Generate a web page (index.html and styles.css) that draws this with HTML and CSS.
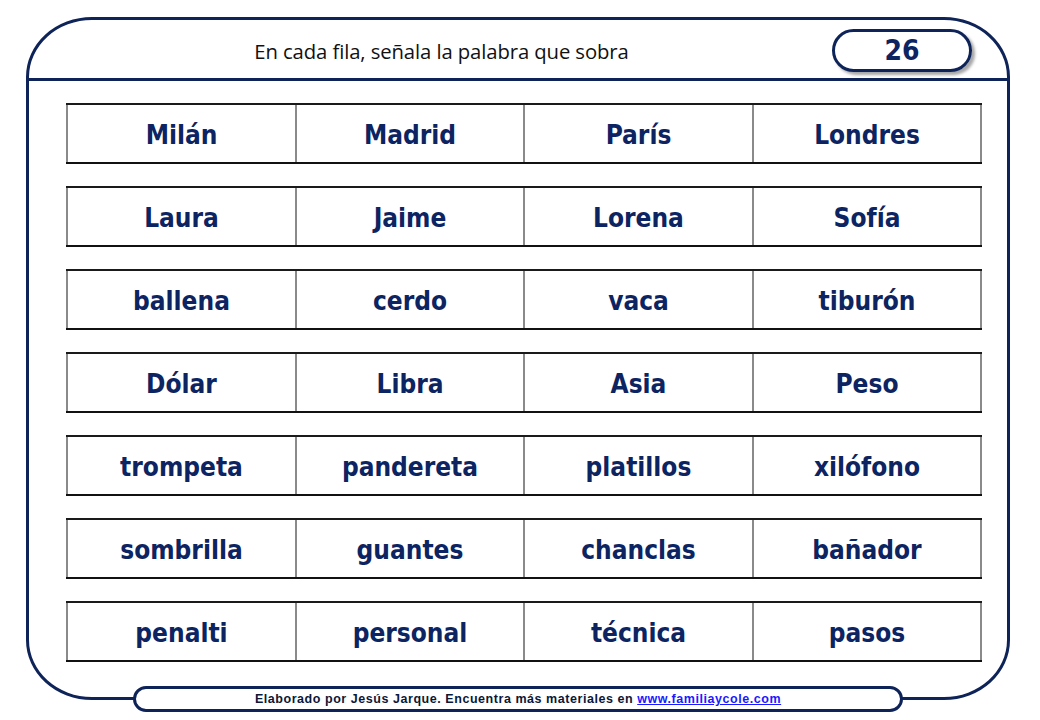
FILE: index.html
```html
<!DOCTYPE html>
<html lang="es">
<head>
<meta charset="utf-8">
<title>En cada fila, señala la palabra que sobra</title>
<link rel="stylesheet" href="styles.css">
</head>
<body>
<div class="sheet">
  <header class="head">
    <h1 class="title">En cada fila, señala la palabra que sobra</h1>
    <div class="badge">26</div>
  </header>
  <main class="rows">
    <div class="row"><div class="cell">Milán</div><div class="cell">Madrid</div><div class="cell">París</div><div class="cell">Londres</div></div>
    <div class="row"><div class="cell">Laura</div><div class="cell">Jaime</div><div class="cell">Lorena</div><div class="cell">Sofía</div></div>
    <div class="row"><div class="cell">ballena</div><div class="cell">cerdo</div><div class="cell">vaca</div><div class="cell">tiburón</div></div>
    <div class="row"><div class="cell">Dólar</div><div class="cell">Libra</div><div class="cell">Asia</div><div class="cell">Peso</div></div>
    <div class="row"><div class="cell">trompeta</div><div class="cell">pandereta</div><div class="cell">platillos</div><div class="cell">xilófono</div></div>
    <div class="row"><div class="cell">sombrilla</div><div class="cell">guantes</div><div class="cell">chanclas</div><div class="cell">bañador</div></div>
    <div class="row"><div class="cell">penalti</div><div class="cell">personal</div><div class="cell">técnica</div><div class="cell">pasos</div></div>
  </main>
  <footer class="foot">Elaborado por Jesús Jarque. Encuentra más materiales en <a class="link" href="#">www.familiaycole.com</a></footer>
</div>
</body>
</html>
```
FILE: styles.css
```css
html, body {
  margin: 0;
  padding: 0;
  background: #ffffff;
}

body {
  box-sizing: border-box;
  min-height: 720px;
  padding: 17px 0 20px 26px;
}

.sheet {
  box-sizing: border-box;
  width: 984px;
  height: 683px;
  border: 3px solid #0e2357;
  border-radius: 66px / 60px;
  display: flex;
  flex-direction: column;
}

.head {
  box-sizing: border-box;
  height: 61px;
  flex-shrink: 0;
  border-bottom: 3px solid #0e2357;
  display: flex;
  align-items: center;
  padding: 0 35px 0 22px;
}

.title {
  flex: 1;
  margin: 0;
  text-align: center;
  font-family: "Open Sans", "DejaVu Sans", sans-serif;
  font-weight: 400;
  font-size: 20.3px;
  color: #111111;
  letter-spacing: -0.1px;
  padding-top: 4px;
}

.badge {
  box-sizing: border-box;
  width: 140px;
  height: 43px;
  margin-top: 2px;
  border: 3px solid #0e2357;
  border-radius: 22px;
  box-shadow: 3px 3px 3px rgba(0, 0, 0, 0.35);
  display: flex;
  align-items: center;
  justify-content: center;
  font-family: "DejaVu Sans Condensed", "DejaVu Sans", sans-serif;
  font-stretch: condensed;
  font-weight: 700;
  font-size: 28px;
  color: #0c2461;
}

.rows {
  display: flex;
  flex-direction: column;
  gap: 22px;
  padding: 22px 25px 0 37px;
}

.row {
  box-sizing: border-box;
  height: 61px;
  display: grid;
  grid-template-columns: 229px 228px 229px 1fr;
  border-top: 2px solid #1a1a1a;
  border-bottom: 2px solid #111111;
}

.cell {
  display: flex;
  align-items: center;
  justify-content: center;
  border-left: 2px solid #8a8a8a;
  font-family: "DejaVu Sans Condensed", "DejaVu Sans", sans-serif;
  font-stretch: condensed;
  font-weight: 700;
  font-size: 26px;
  color: #0c2461;
  padding-top: 3px;
}

.cell:last-child {
  border-right: 2px solid #8a8a8a;
}

.foot {
  box-sizing: border-box;
  flex-shrink: 0;
  margin: auto 104px -15px 104px;
  height: 26px;
  border: 3px solid #0e2357;
  border-radius: 13px;
  background: #ffffff;
  display: flex;
  align-items: center;
  justify-content: center;
  font-family: "Liberation Sans", Arial, sans-serif;
  font-weight: 700;
  font-size: 12.5px;
  letter-spacing: 0.55px;
  color: #0a1838;
  white-space: pre;
}

.link {
  color: #1a1aff;
  text-decoration: underline;
}
```
